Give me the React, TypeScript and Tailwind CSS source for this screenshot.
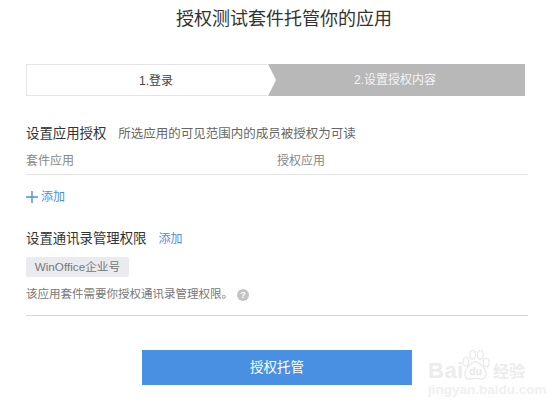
const font = { fontFamily: '"Liberation Sans", "Noto Sans CJK SC", sans-serif' }

function Watermark() {
  return (
    <div className="absolute left-[428px] top-[349px] w-[100px] h-[48px] text-[#ececec]">
      <div className="flex items-end h-[33px]">
        <span className="text-[22px] leading-[22px] font-bold tracking-[0.5px] w-[32px]">Bai</span>
        <svg width="31" height="33" viewBox="0 0 32 34" fill="none" stroke="#e8e8e8" strokeWidth="1.2">
          <ellipse cx="6" cy="13" rx="3" ry="4.5" />
          <ellipse cx="13" cy="6" rx="3" ry="4.5" />
          <ellipse cx="21" cy="6" rx="3" ry="4.5" />
          <ellipse cx="27" cy="14" rx="3" ry="4.5" />
          <path d="M16 13c-4 0-6 4-9 7-3 4-3 11 3 11 2 0 4-1 6-1s4 1 6 1c6 0 6-7 3-11-3-3-5-7-9-7z" />
          <text x="16" y="27" textAnchor="middle" fontSize="11" fontWeight="700" fill="#e8e8e8" stroke="none">du</text>
        </svg>
        <span className="text-[16px] leading-[20px] font-bold ml-[2px]">经验</span>
      </div>
      <div className="text-[13.5px] leading-[14px] font-bold mt-[1px] text-[#f0f0f0]">jingyan.baidu.com</div>
    </div>
  )
}

export default function App() {
  return (
    <div className="relative w-[558px] h-[409px] bg-white overflow-hidden" style={font}>
      <h1 className="pt-[9px] pl-[10px] text-center text-[18px] leading-[20px] font-normal text-[#333333]">授权测试套件托管你的应用</h1>

      {/* Steps */}
      <div className="flex h-[32px] mt-[35px] ml-[26px] mr-[33px] text-[12px] leading-[32px]">
        <div className="relative w-[241px] border-y border-l border-[#e4e4e4] bg-white text-center text-[#444444] pl-[18px]">
          1.登录
        </div>
        <div className="relative flex-1 bg-[#b8b8b8] text-center text-[#f4f4f4] pr-[2px]">
          <svg width="10" height="32" viewBox="0 0 10 32" className="absolute left-0 top-0">
            <path d="M0 0h1l8 16-8 16H0z" fill="#ffffff" />
          </svg>
          2.设置授权内容
        </div>
      </div>

      <div className="mt-[28px] ml-[26px] mr-[30px]">
        <div className="flex items-baseline h-[20px]">
          <span className="text-[13.4px] text-[#333333]">设置应用授权</span>
          <span className="ml-[12px] text-[12.5px] text-[#666666]">所选应用的可见范围内的成员被授权为可读</span>
        </div>
        <div className="flex mt-[9px] h-[22px] border-b border-[#e4e4e4] text-[12px] leading-[17px] text-[#888888]">
          <span className="w-[251px]">套件应用</span>
          <span>授权应用</span>
        </div>
        <div className="flex items-center mt-[13px] h-[18px] text-[12px] text-[#4a90e2]">
          <svg width="12" height="12" viewBox="0 0 12 12" stroke="#4a90e2" strokeWidth="1.4">
            <path d="M6 0v12M0 6h12" />
          </svg>
          <span className="ml-[3px]">添加</span>
        </div>

        <div className="flex items-baseline mt-[23px] h-[20px]">
          <span className="text-[13.4px] text-[#333333]">设置通讯录管理权限</span>
          <span className="ml-[12px] text-[12px] text-[#4a90e2]">添加</span>
        </div>
        <div className="mt-[8px] w-[103px] h-[20px] bg-[#eaebef] rounded-[2px] text-center text-[11.7px] leading-[20px] text-[#777777]">
          WinOffice企业号
        </div>
        <div className="flex items-center mt-[10px] h-[16px] text-[11.5px] text-[#777777]">
          <span>该应用套件需要你授权通讯录管理权限。</span>
          <span className="ml-[4px] w-[12px] h-[12px] rounded-full bg-[#c4c4c4] text-white text-[9px] leading-[12px] text-center font-bold">?</span>
        </div>
        <div className="mt-[12px] border-b border-[#d8d8d8]" />
      </div>

      <div className="mt-[34px] ml-[142px] w-[270px] h-[35px] bg-[#4a90e2] text-center text-[13.5px] leading-[35px] text-white">
        授权托管
      </div>

      <Watermark />
    </div>
  )
}
